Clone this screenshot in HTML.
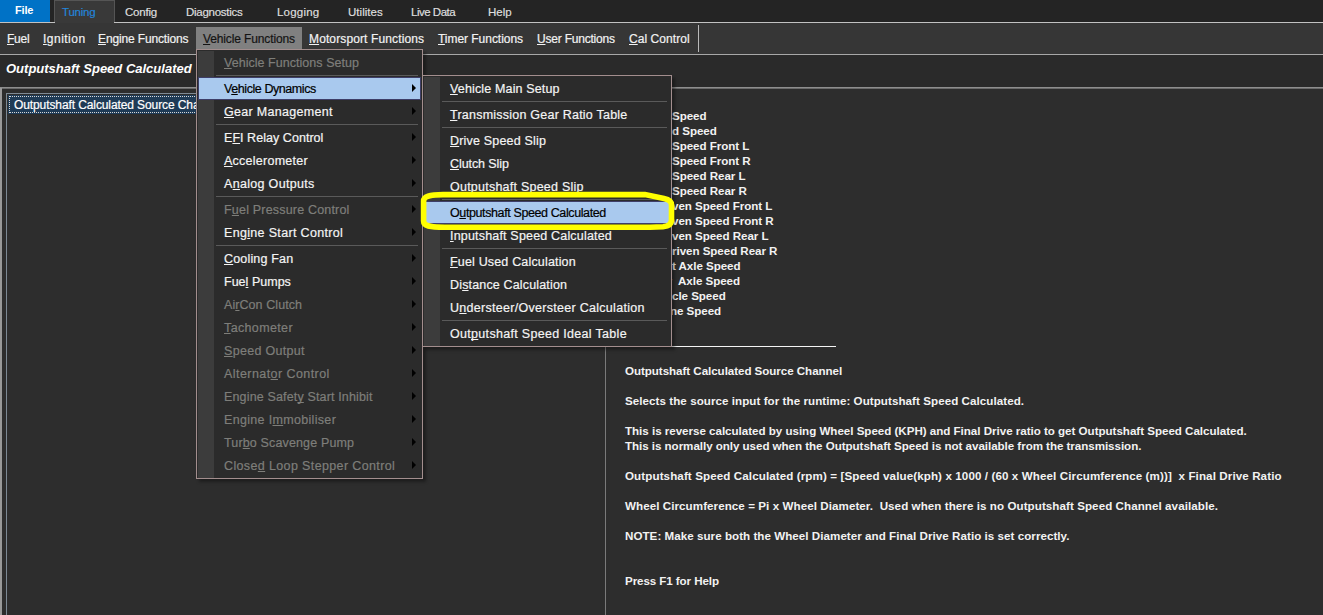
<!DOCTYPE html>
<html><head><meta charset="utf-8"><style>
html,body{margin:0;padding:0;}
body{width:1323px;height:615px;overflow:hidden;position:relative;background:#2d2d2d;font-family:"Liberation Sans",sans-serif;}
.t{position:absolute;white-space:nowrap;}
.t.n{-webkit-text-stroke:0.2px currentColor;}
.t u{text-decoration:underline;text-decoration-thickness:1px;text-underline-offset:0.5px;text-decoration-skip-ink:none;}
.r{position:absolute;}
.menu{position:absolute;box-sizing:border-box;background:#2b2b2b;border:1px solid #a38e8e;box-shadow:3px 3px 3px rgba(0,0,0,0.35);}
.arr{position:absolute;width:0;height:0;border-top:4px solid transparent;border-bottom:4px solid transparent;border-left:4px solid #000;}
.lst{left:0;font-size:11.6px;line-height:16px;font-weight:bold;color:#f2f2f2;letter-spacing:-0.05px;}
.pad{display:inline-block;width:6px;}
.neg{display:inline-block;margin-left:-2px;}
.lst{margin-top:-12px;}
.pre{display:inline-block;width:672px;text-align:right;}
.ell{position:absolute;left:0;top:0;}
</style></head><body>
<div class="r" style="left:0px;top:0px;width:1323px;height:22px;background:#242424;"></div>
<div class="r" style="left:0px;top:0px;width:50px;height:22px;background:#0072c6;"></div>
<div class="t" style="left:15px;top:2.69px;font-size:11px;line-height:15px;font-weight:bold;font-style:normal;color:#ffffff;letter-spacing:-0.200px;">File</div>
<div class="r" style="left:0px;top:22px;width:1323px;height:1px;background:#c2c2c2;"></div>
<div class="r" style="left:54px;top:0px;width:61px;height:22px;background:#393939;box-shadow:inset 1px 1px 0 #555, inset -1px 0 0 #555;"></div>
<div class="r" style="left:55px;top:22px;width:59px;height:1px;background:#393939;"></div>
<div class="t n" style="left:62px;top:4.02px;font-size:11.5px;line-height:16px;font-weight:normal;font-style:normal;color:#2484d8;letter-spacing:-0.208px;">Tuning</div>
<div class="t n" style="left:125px;top:4.02px;font-size:11.5px;line-height:16px;font-weight:normal;font-style:normal;color:#dedede;letter-spacing:-0.209px;">Config</div>
<div class="t n" style="left:186px;top:4.02px;font-size:11.5px;line-height:16px;font-weight:normal;font-style:normal;color:#dedede;letter-spacing:-0.269px;">Diagnostics</div>
<div class="t n" style="left:277px;top:4.02px;font-size:11.5px;line-height:16px;font-weight:normal;font-style:normal;color:#dedede;letter-spacing:0.211px;">Logging</div>
<div class="t n" style="left:348px;top:4.02px;font-size:11.5px;line-height:16px;font-weight:normal;font-style:normal;color:#dedede;letter-spacing:0.035px;">Utilites</div>
<div class="t n" style="left:411px;top:4.02px;font-size:11.5px;line-height:16px;font-weight:normal;font-style:normal;color:#dedede;letter-spacing:-0.486px;">Live Data</div>
<div class="t n" style="left:488px;top:4.02px;font-size:11.5px;line-height:16px;font-weight:normal;font-style:normal;color:#dedede;letter-spacing:-0.019px;">Help</div>
<div class="r" style="left:0px;top:23px;width:1323px;height:31px;background:#363636;"></div>
<div class="r" style="left:196px;top:27px;width:106px;height:22px;background:#808080;"></div>
<div class="t n" style="left:7px;top:31.34px;font-size:12px;line-height:17px;font-weight:normal;font-style:normal;color:#f2f2f2;letter-spacing:-0.226px;"><u>F</u>uel</div>
<div class="t n" style="left:43px;top:31.34px;font-size:12px;line-height:17px;font-weight:normal;font-style:normal;color:#f2f2f2;letter-spacing:0.483px;"><u>I</u>gnition</div>
<div class="t n" style="left:98px;top:31.34px;font-size:12px;line-height:17px;font-weight:normal;font-style:normal;color:#f2f2f2;letter-spacing:-0.142px;"><u>E</u>ngine Functions</div>
<div class="t n" style="left:203px;top:31.34px;font-size:12px;line-height:17px;font-weight:normal;font-style:normal;color:#141414;letter-spacing:-0.128px;"><u>V</u>ehicle Functions</div>
<div class="t n" style="left:309px;top:31.34px;font-size:12px;line-height:17px;font-weight:normal;font-style:normal;color:#f2f2f2;letter-spacing:0.120px;"><u>M</u>otorsport Functions</div>
<div class="t n" style="left:438px;top:31.34px;font-size:12px;line-height:17px;font-weight:normal;font-style:normal;color:#f2f2f2;letter-spacing:-0.041px;"><u>T</u>imer Functions</div>
<div class="t n" style="left:537px;top:31.34px;font-size:12px;line-height:17px;font-weight:normal;font-style:normal;color:#f2f2f2;letter-spacing:-0.207px;"><u>U</u>ser Functions</div>
<div class="t n" style="left:629px;top:31.34px;font-size:12px;line-height:17px;font-weight:normal;font-style:normal;color:#f2f2f2;letter-spacing:0.064px;"><u>C</u>al Control</div>
<div class="r" style="left:698px;top:25px;width:1px;height:27px;background:#bababa;"></div>
<div class="r" style="left:0px;top:54px;width:1323px;height:1px;background:#a8a8a8;"></div>
<div class="r" style="left:0px;top:55px;width:1323px;height:32px;background:#2a2a2a;"></div>
<div class="t" style="left:6px;top:60.00px;font-size:13px;line-height:18px;font-weight:bold;font-style:italic;color:#ffffff;letter-spacing:0.000px;">Outputshaft Speed Calculated</div>
<div class="r" style="left:0px;top:87px;width:1323px;height:1px;background:#8e8e8e;"></div>
<div class="r" style="left:0px;top:88px;width:1323px;height:1px;background:#6a6a6a;"></div>
<div class="r" style="left:0px;top:88px;width:2px;height:527px;background:#999999;"></div>
<div class="r" style="left:6px;top:93px;width:1px;height:522px;background:#7d8994;"></div>
<div class="r" style="left:6px;top:93px;width:600px;height:1px;background:#7d8994;"></div>
<div class="r" style="left:8px;top:95px;width:400px;height:19px;background:#1f3b56;outline:1px dotted #d8d8d8;outline-offset:-2px;"></div>
<div class="t n" style="left:14px;top:97.34px;font-size:12px;line-height:17px;font-weight:normal;font-style:normal;color:#ffffff;letter-spacing:-0.100px;">Outputshaft Calculated Source Channel</div>
<div class="r" style="left:605px;top:347px;width:1px;height:268px;background:#7a7a7a;"></div>
<div class="t" style="left:625px;top:363.18px;font-size:11.6px;line-height:16px;font-weight:bold;font-style:normal;color:#f2f2f2;letter-spacing:-0.050px;white-space:pre;">Outputshaft Calculated Source Channel</div>
<div class="t" style="left:625px;top:393.18px;font-size:11.6px;line-height:16px;font-weight:bold;font-style:normal;color:#f2f2f2;letter-spacing:0.059px;white-space:pre;">Selects the source input for the runtime: Outputshaft Speed Calculated.</div>
<div class="t" style="left:625px;top:423.18px;font-size:11.6px;line-height:16px;font-weight:bold;font-style:normal;color:#f2f2f2;letter-spacing:-0.023px;white-space:pre;">This is reverse calculated by using Wheel Speed (KPH) and Final Drive ratio to get Outputshaft Speed Calculated.</div>
<div class="t" style="left:625px;top:438.18px;font-size:11.6px;line-height:16px;font-weight:bold;font-style:normal;color:#f2f2f2;letter-spacing:-0.045px;white-space:pre;">This is normally only used when the Outputshaft Speed is not available from the transmission.</div>
<div class="t" style="left:625px;top:468.18px;font-size:11.6px;line-height:16px;font-weight:bold;font-style:normal;color:#f2f2f2;letter-spacing:0.104px;white-space:pre;">Outputshaft Speed Calculated (rpm) = [Speed value(kph) x 1000 / (60 x Wheel Circumference (m))]  x Final Drive Ratio</div>
<div class="t" style="left:625px;top:498.18px;font-size:11.6px;line-height:16px;font-weight:bold;font-style:normal;color:#f2f2f2;letter-spacing:0.069px;white-space:pre;">Wheel Circumference = Pi x Wheel Diameter.  Used when there is no Outputshaft Speed Channel available.</div>
<div class="t" style="left:625px;top:528.18px;font-size:11.6px;line-height:16px;font-weight:bold;font-style:normal;color:#f2f2f2;letter-spacing:0.043px;white-space:pre;">NOTE: Make sure both the Wheel Diameter and Final Drive Ratio is set correctly.</div>
<div class="t" style="left:625px;top:573.18px;font-size:11.6px;line-height:16px;font-weight:bold;font-style:normal;color:#f2f2f2;letter-spacing:-0.080px;white-space:pre;">Press F1 for Help</div>
<div class="t lst" style="top:119.5px"><span class="pre">Wheel </span>Speed</div>
<div class="t lst" style="top:134.5px"><span class="pre">Groun</span>d Speed</div>
<div class="t lst" style="top:149.5px"><span class="pre">Wheel </span>Speed Front L</div>
<div class="t lst" style="top:164.5px"><span class="pre">Wheel </span>Speed Front R</div>
<div class="t lst" style="top:179.5px"><span class="pre">Wheel </span>Speed Rear L</div>
<div class="t lst" style="top:194.5px"><span class="pre">Wheel </span>Speed Rear R</div>
<div class="t lst" style="top:209.5px"><span class="pre">Dri</span>ven Speed Front L</div>
<div class="t lst" style="top:224.5px"><span class="pre">Dri</span>ven Speed Front R</div>
<div class="t lst" style="top:239.5px"><span class="pre">Dri</span>ven Speed Rear L</div>
<div class="t lst" style="top:254.5px"><span class="pre">D</span>riven Speed Rear R</div>
<div class="t lst" style="top:269.5px"><span class="pre">Fron</span>t Axle Speed</div>
<div class="t lst" style="top:284.5px"><span class="pre">Rear </span><i class="pad"></i>Axle Speed</div>
<div class="t lst" style="top:299.5px"><span class="pre">Vehi</span>cle Speed</div>
<div class="t lst" style="top:314.5px"><span class="pre">Engi</span><i class="neg"></i>ne Speed</div>
<div class="r" style="left:605px;top:346px;width:231px;height:1px;background:#f4f4f4;"></div>
<div class="menu" style="left:196px;top:49px;width:227px;height:430px;"></div>
<div class="r" style="left:198px;top:51px;width:16px;height:427px;background:#3c3c3c;"></div>
<div class="t n" style="left:224px;top:53.67px;font-size:12.5px;line-height:18px;font-weight:normal;font-style:normal;color:#7e7e7a;letter-spacing:0.038px;"><u>V</u>ehicle Functions Setup</div>
<div class="r" style="left:216px;top:75px;width:202px;height:1px;background:#5a5a5a;"></div>
<div class="r" style="left:198px;top:77px;width:223px;height:23px;background:#a9c9ee;box-shadow:inset 0 0 0 1px #3e3e68;"></div>
<div class="t n" style="left:224px;top:79.67px;font-size:12.5px;line-height:18px;font-weight:normal;font-style:normal;color:#000000;letter-spacing:-0.427px;">V<u>e</u>hicle Dynamics</div>
<div class="arr" style="left:412px;top:84px;"></div>
<div class="t n" style="left:224px;top:102.67px;font-size:12.5px;line-height:18px;font-weight:normal;font-style:normal;color:#f4f4f4;letter-spacing:0.304px;"><u>G</u>ear Management</div>
<div class="arr" style="left:412px;top:107px;"></div>
<div class="r" style="left:216px;top:124px;width:202px;height:1px;background:#5a5a5a;"></div>
<div class="t n" style="left:224px;top:128.67px;font-size:12.5px;line-height:18px;font-weight:normal;font-style:normal;color:#f4f4f4;letter-spacing:0.046px;">E<u>F</u>I Relay Control</div>
<div class="arr" style="left:412px;top:133px;"></div>
<div class="t n" style="left:224px;top:151.67px;font-size:12.5px;line-height:18px;font-weight:normal;font-style:normal;color:#f4f4f4;letter-spacing:0.256px;"><u>A</u>ccelerometer</div>
<div class="arr" style="left:412px;top:156px;"></div>
<div class="t n" style="left:224px;top:174.67px;font-size:12.5px;line-height:18px;font-weight:normal;font-style:normal;color:#f4f4f4;letter-spacing:0.314px;">A<u>n</u>alog Outputs</div>
<div class="arr" style="left:412px;top:179px;"></div>
<div class="r" style="left:216px;top:196px;width:202px;height:1px;background:#5a5a5a;"></div>
<div class="t n" style="left:224px;top:200.67px;font-size:12.5px;line-height:18px;font-weight:normal;font-style:normal;color:#7e7e7a;letter-spacing:0.190px;">F<u>u</u>el Pressure Control</div>
<div class="arr" style="left:412px;top:205px;"></div>
<div class="t n" style="left:224px;top:223.67px;font-size:12.5px;line-height:18px;font-weight:normal;font-style:normal;color:#f4f4f4;letter-spacing:0.327px;">Eng<u>i</u>ne Start Control</div>
<div class="arr" style="left:412px;top:228px;"></div>
<div class="r" style="left:216px;top:245px;width:202px;height:1px;background:#5a5a5a;"></div>
<div class="t n" style="left:224px;top:249.67px;font-size:12.5px;line-height:18px;font-weight:normal;font-style:normal;color:#f4f4f4;letter-spacing:0.175px;"><u>C</u>ooling Fan</div>
<div class="arr" style="left:412px;top:254px;"></div>
<div class="t n" style="left:224px;top:272.67px;font-size:12.5px;line-height:18px;font-weight:normal;font-style:normal;color:#f4f4f4;letter-spacing:0.017px;">Fue<u>l</u> Pumps</div>
<div class="arr" style="left:412px;top:277px;"></div>
<div class="t n" style="left:224px;top:295.67px;font-size:12.5px;line-height:18px;font-weight:normal;font-style:normal;color:#7e7e7a;letter-spacing:0.070px;">Ai<u>r</u>Con Clutch</div>
<div class="arr" style="left:412px;top:300px;"></div>
<div class="t n" style="left:224px;top:318.67px;font-size:12.5px;line-height:18px;font-weight:normal;font-style:normal;color:#7e7e7a;letter-spacing:0.362px;"><u>T</u>achometer</div>
<div class="arr" style="left:412px;top:323px;"></div>
<div class="t n" style="left:224px;top:341.67px;font-size:12.5px;line-height:18px;font-weight:normal;font-style:normal;color:#7e7e7a;letter-spacing:0.294px;"><u>S</u>peed Output</div>
<div class="arr" style="left:412px;top:346px;"></div>
<div class="t n" style="left:224px;top:364.67px;font-size:12.5px;line-height:18px;font-weight:normal;font-style:normal;color:#7e7e7a;letter-spacing:0.436px;">Alternat<u>o</u>r Control</div>
<div class="arr" style="left:412px;top:369px;"></div>
<div class="t n" style="left:224px;top:387.67px;font-size:12.5px;line-height:18px;font-weight:normal;font-style:normal;color:#7e7e7a;letter-spacing:0.152px;">Engine Safet<u>y</u> Start Inhibit</div>
<div class="arr" style="left:412px;top:392px;"></div>
<div class="t n" style="left:224px;top:410.67px;font-size:12.5px;line-height:18px;font-weight:normal;font-style:normal;color:#7e7e7a;letter-spacing:0.322px;">Engine I<u>m</u>mobiliser</div>
<div class="arr" style="left:412px;top:415px;"></div>
<div class="t n" style="left:224px;top:433.67px;font-size:12.5px;line-height:18px;font-weight:normal;font-style:normal;color:#7e7e7a;letter-spacing:0.143px;">Tur<u>b</u>o Scavenge Pump</div>
<div class="arr" style="left:412px;top:438px;"></div>
<div class="t n" style="left:224px;top:456.67px;font-size:12.5px;line-height:18px;font-weight:normal;font-style:normal;color:#7e7e7a;letter-spacing:0.368px;">Close<u>d</u> Loop Stepper Control</div>
<div class="arr" style="left:412px;top:461px;"></div>
<div class="menu" style="left:422px;top:75px;width:250px;height:272px;"></div>
<div class="r" style="left:424px;top:77px;width:16px;height:269px;background:#3c3c3c;"></div>
<div class="t n" style="left:450px;top:79.67px;font-size:12.5px;line-height:18px;font-weight:normal;font-style:normal;color:#f4f4f4;letter-spacing:0.149px;"><u>V</u>ehicle Main Setup</div>
<div class="r" style="left:442px;top:101px;width:225px;height:1px;background:#5a5a5a;"></div>
<div class="t n" style="left:450px;top:105.67px;font-size:12.5px;line-height:18px;font-weight:normal;font-style:normal;color:#f4f4f4;letter-spacing:0.229px;"><u>T</u>ransmission Gear Ratio Table</div>
<div class="r" style="left:442px;top:127px;width:225px;height:1px;background:#5a5a5a;"></div>
<div class="t n" style="left:450px;top:131.67px;font-size:12.5px;line-height:18px;font-weight:normal;font-style:normal;color:#f4f4f4;letter-spacing:0.190px;"><u>D</u>rive Speed Slip</div>
<div class="t n" style="left:450px;top:154.67px;font-size:12.5px;line-height:18px;font-weight:normal;font-style:normal;color:#f4f4f4;letter-spacing:-0.080px;"><u>C</u>lutch Slip</div>
<div class="t n" style="left:450px;top:177.67px;font-size:12.5px;line-height:18px;font-weight:normal;font-style:normal;color:#f4f4f4;letter-spacing:0.233px;">Outputshaft Speed Slip</div>
<div class="r" style="left:442px;top:199px;width:225px;height:1px;background:#5a5a5a;"></div>
<div class="r" style="left:424px;top:201px;width:246px;height:23px;background:#a9c9ee;box-shadow:inset 0 0 0 1px #3e3e68;"></div>
<div class="t n" style="left:450px;top:203.67px;font-size:12.5px;line-height:18px;font-weight:normal;font-style:normal;color:#000000;letter-spacing:-0.390px;">O<u>u</u>tputshaft Speed Calculated</div>
<div class="t n" style="left:450px;top:226.67px;font-size:12.5px;line-height:18px;font-weight:normal;font-style:normal;color:#f4f4f4;letter-spacing:0.181px;"><u>I</u>nputshaft Speed Calculated</div>
<div class="r" style="left:442px;top:248px;width:225px;height:1px;background:#5a5a5a;"></div>
<div class="t n" style="left:450px;top:252.67px;font-size:12.5px;line-height:18px;font-weight:normal;font-style:normal;color:#f4f4f4;letter-spacing:0.168px;"><u>F</u>uel Used Calculation</div>
<div class="t n" style="left:450px;top:275.67px;font-size:12.5px;line-height:18px;font-weight:normal;font-style:normal;color:#f4f4f4;letter-spacing:0.158px;">Di<u>s</u>tance Calculation</div>
<div class="t n" style="left:450px;top:298.67px;font-size:12.5px;line-height:18px;font-weight:normal;font-style:normal;color:#f4f4f4;letter-spacing:0.286px;">U<u>n</u>dersteer/Oversteer Calculation</div>
<div class="r" style="left:442px;top:320px;width:225px;height:1px;background:#5a5a5a;"></div>
<div class="t n" style="left:450px;top:324.67px;font-size:12.5px;line-height:18px;font-weight:normal;font-style:normal;color:#f4f4f4;letter-spacing:0.310px;">Out<u>p</u>utshaft Speed Ideal Table</div>
<svg class="ell" width="1323" height="615" viewBox="0 0 1323 615"><path d="M443 194.6 L645 194.6 L664 198.5 Q671.5 200 671.5 205 L671.5 220 Q671.5 226 663 226.8 L650 227.2 L445 227.2 C429 227.2 423.6 226 423.6 221 L423.6 201 C423.6 196.5 429 194.6 443 194.6 Z" fill="none" stroke="#ffff00" stroke-width="5.6"/></svg>
</body></html>
